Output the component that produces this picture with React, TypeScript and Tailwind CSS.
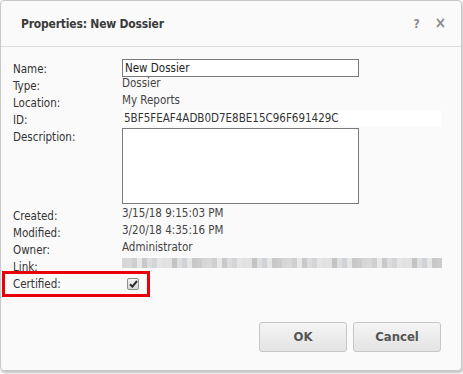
import React from 'react';

const font = { fontFamily: '"DejaVu Sans Condensed", "Liberation Sans", sans-serif' };

const Row: React.FC<{ label: string; children?: React.ReactNode; h?: string }> = ({ label, children, h = 'h-[17px]' }) => (
    <div className={`flex ${h}`}>
        <div className="w-[109px] shrink-0 pt-[2px] leading-[17px] text-[11.5px] text-[#333]">{label}</div>
        <div className="flex-1 leading-[15px] text-[11.5px] text-[#444]">{children}</div>
    </div>
);

const blur = ['#d6d6d6', '#e4e4e4', '#c8c8c8', '#dcdcdc', '#cfd2d6', '#e8e8e8', '#c4c4c4', '#d9d9d9', '#e1e1e1', '#cccccc', '#d3d5d8', '#e6e6e6', '#c9c9c9', '#dedede', '#d0d0d0', '#e3e3e3'];

const App: React.FC = () => {
    return (
        <div className="w-[463px] h-[374px] bg-white relative" style={font}>
            <div className="w-[462px] h-[371px] bg-[#fafafa] border border-[#c8c8c8] rounded-[4px] shadow-[1px_2px_3px_rgba(0,0,0,0.25)] flex flex-col">
                <div className="h-[46px] flex items-center justify-between pl-[20px] pr-[15px] border-b border-[#dedede] shrink-0">
                    <h2 className="text-[12px] tracking-[-0.2px] font-bold text-[#3a3a3a]">Properties: New Dossier</h2>
                    <div className="flex items-center gap-[15px] text-[#8a8a8a] font-bold">
                        <span className="text-[12px]">?</span>
                        <span className="text-[15px] leading-none">×</span>
                    </div>
                </div>

                <div className="pl-[12px] pt-[12px] flex flex-col">
                    <Row label="Name:">
                        <div className="w-[237px] h-[18px] border border-[#7a7a7a] bg-white px-[2px] leading-[16px] text-[#222]">New Dossier</div>
                    </Row>
                    <Row label="Type:">Dossier</Row>
                    <Row label="Location:">My Reports</Row>
                    <Row label="ID:">
                        <div className="w-[319px] h-[16px] bg-white px-[2px] leading-[16px] text-[#333]">5BF5FEAF4ADB0D7E8BE15C96F691429C</div>
                    </Row>
                    <Row label="Description:" h="h-[79px]">
                        <div className="w-[237px] h-[76px] mt-[1px] border border-[#7a7a7a] bg-white" />
                    </Row>
                    <Row label="Created:">3/15/18 9:15:03 PM</Row>
                    <Row label="Modified:">3/20/18 4:35:16 PM</Row>
                    <Row label="Owner:">Administrator</Row>
                    <Row label="Link:">
                        <div className="w-[320px] h-[10px] mt-[1px] flex">
                            {Array.from({ length: 64 }).map((_, i) => (
                                <div key={i} className="flex-1 h-full" style={{ backgroundColor: blur[(i * 7) % blur.length] }} />
                            ))}
                        </div>
                    </Row>
                    <Row label="Certified:">
                        <div className="ml-[5px] mt-[4px] w-[12px] h-[12px] rounded-[2px] border border-[#8f8f8f] bg-gradient-to-b from-[#f4f4f4] to-[#d8d8d8] flex items-center justify-center">
                            <svg width="9" height="8" viewBox="0 0 9 8">
                                <path d="M1 4.2 L3.4 6.6 L8 1" fill="none" stroke="#2a2a2a" strokeWidth="2" />
                            </svg>
                        </div>
                    </Row>
                </div>

                <div className="mt-auto mb-[18px] mr-[20px] flex justify-end gap-[6px]">
                    <button className="w-[88px] h-[30px] rounded-[3px] border border-[#c6c6c6] bg-gradient-to-b from-[#f4f4f4] to-[#e4e4e4] text-[13px] font-bold text-[#555]">OK</button>
                    <button className="w-[88px] h-[30px] rounded-[3px] border border-[#c6c6c6] bg-gradient-to-b from-[#f4f4f4] to-[#e4e4e4] text-[13px] font-bold text-[#555]">Cancel</button>
                </div>
            </div>

            <div className="absolute left-[2px] top-[271px] w-[148px] h-[26px] border-[3px] border-[#e8000b]" />
        </div>
    );
};

export default App;
